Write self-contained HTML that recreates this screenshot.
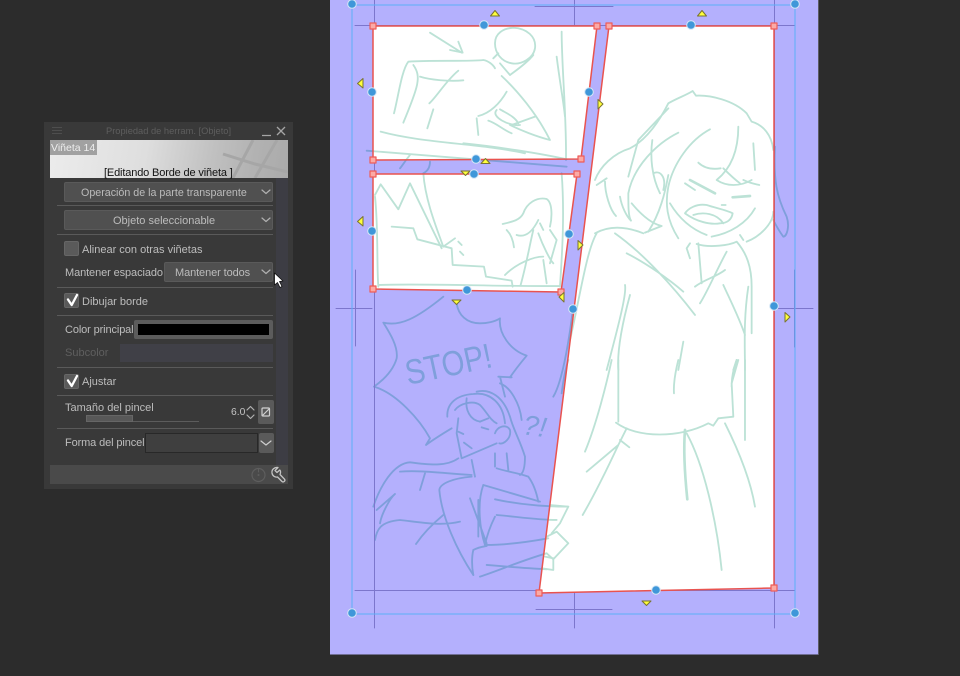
<!DOCTYPE html>
<html><head><meta charset="utf-8">
<style>
html,body{margin:0;padding:0;background:#2c2c2c}
#root{position:relative;width:960px;height:676px;overflow:hidden;background:#2c2c2c;font-family:"Liberation Sans",sans-serif;font-size:11px;color:#bdbdbd;filter:blur(.35px)}
#root>svg{position:absolute;left:0;top:0}
.a{position:absolute}
.t{position:absolute;white-space:nowrap;line-height:14px}
.dd{position:absolute;background:#505050;border:1px solid #5a5a5a;border-radius:2px;box-sizing:border-box;text-align:center;line-height:18px;color:#bcbcbc}
.dd span{top:1px}
.hr{position:absolute;left:57px;width:216px;height:1px;background:#5a5a5a}
.cb{position:absolute;left:64px;width:15px;height:15px;background:#5a5a5a;border:1px solid #666;border-radius:2px;box-sizing:border-box}
</style></head><body>
<div id="root">
<svg width="960" height="676" viewBox="0 0 960 676" fill="none" stroke-linecap="round" stroke-linejoin="round">
<defs>
<clipPath id="pc"><polygon points="373,26 597,26 581,159 373,160"/><polygon points="373,174 577,174 561,292 373,289"/><polygon points="609,26 774,26 774,588 539,593"/></clipPath>
<g id="sk">
<g transform="translate(330,0) scale(.3333)" stroke-width="5.500">
<path d="M300 98L395 158M385 125L398 158L360 150"/>
<path d="M495 130C495 100 520 85 550 83C590 85 620 110 615 145C610 175 575 195 545 190C515 185 495 160 495 130Z"/>
<path d="M490 175L505 160M510 190L540 225M610 165C590 190 560 210 540 225"/>
<path d="M192 340C205 290 215 210 235 185C300 180 420 185 460 180C475 182 490 195 495 205"/>
<path d="M250 195C275 230 265 260 220 368M270 230C300 240 360 245 400 241M385 212C350 240 320 290 298 310M310 328L292 385"/>
<path d="M515 228C560 270 620 340 660 420C620 410 570 390 540 375M530 275C510 310 480 340 445 348M440 355L445 405"/>
<path d="M475 362C500 370 520 390 545 400M500 330C480 350 540 380 570 375M615 350L545 375M510 328C530 340 555 350 565 370"/>
<path d="M152 395C280 430 450 430 585 460M400 430C500 440 630 460 710 478M695 95C695 200 710 350 708 480M680 170C690 250 700 300 705 350M110 452C250 465 400 475 710 500"/>
<path d="M240 465C220 490 215 500 210 505M300 485C300 505 290 515 280 520"/>
<path d="M135 585L152 553L205 628L240 550L335 745M280 520C285 590 310 660 340 740M340 740L375 715M385 725L395 735M390 755L400 765"/>
<path d="M185 680L250 685L262 718L365 745L368 795L462 800L468 830L545 842L548 860"/>
<path d="M135 590C145 680 140 800 145 860M695 520C705 650 695 780 690 860M145 855C300 850 500 860 690 858"/>
<path d="M518 672C550 665 570 660 580 640C590 610 620 590 650 597C670 610 665 660 660 680M530 690C545 705 550 725 552 742M560 705C590 715 610 690 625 660M610 690C600 730 590 790 572 855M525 825C560 790 610 770 640 770M625 700C640 740 660 780 670 790M660 690L680 720L660 790M640 780L650 850M630 670L640 690"/>
</g>
<g transform="translate(340,290) scale(.3333)" stroke-width="5.500">
<path d="M130 98C150 130 175 170 170 205C160 240 130 270 102 290C170 310 240 390 270 445L258 465C285 445 310 430 335 415M130 98C180 110 230 85 310 20"/>
<path d="M350 40C355 75 380 100 420 100C440 100 465 95 480 85C475 130 510 180 560 197C545 215 525 240 510 262"/>
<path d="M322 380C320 340 350 315 400 312C450 305 490 340 495 400M345 360C360 340 400 330 420 345C440 365 450 390 470 400M355 385L350 430L365 505L470 460M380 325C375 360 390 390 420 395"/>
<path d="M410 305C450 295 490 320 510 380C520 420 540 450 555 500C555 530 550 550 540 555M480 280C510 290 540 340 545 390M475 260L515 262M480 260L495 320"/>
<path d="M355 425L370 432M420 395L445 385M425 412L445 418M372 458L395 475M465 430C470 410 500 400 510 420C515 445 490 465 478 460M465 490L465 530M500 490L505 540M470 535C500 545 540 550 565 560C580 580 590 610 595 635"/>
<path d="M100 650C120 590 160 520 210 517C270 525 320 530 355 505M180 545C240 540 310 550 395 555M255 550L240 600M395 510L405 560M105 750C110 720 120 695 180 690C230 695 300 710 360 695M110 660L165 612C150 625 125 670 120 700M228 762C250 730 280 700 310 675"/>
<path d="M395 560C340 565 300 580 298 600C305 680 350 780 400 855M390 625L440 760M415 630L415 740M430 585C410 640 420 720 435 765C500 765 570 755 625 745M430 585C480 600 550 620 600 635M465 628C520 640 590 650 685 650M470 675C530 680 590 690 650 690M465 680C450 710 440 740 435 765"/>
<path d="M400 780C395 800 395 830 400 855M400 780C420 770 430 770 440 768M440 825C500 830 560 835 620 838M420 860C480 840 550 810 620 790"/>
<path d="M630 645L685 650L660 700L635 730M620 740L650 725L685 760L640 808L620 790M615 800L640 805L640 840L605 835"/>
<path d="M700 50C690 130 670 270 640 320"/>
</g>
<g transform="translate(570,80) scale(.3333)" stroke-width="5.500">
<path d="M295 70C270 120 230 180 180 205C130 220 90 260 75 300M175 290L205 180L295 85M295 70C320 55 350 45 368 33L378 47C420 45 490 60 530 100L545 125C580 135 605 165 610 210"/>
<path d="M325 158C260 190 190 260 175 340C175 380 175 410 183 422C170 410 155 380 150 350M105 305C105 340 120 390 138 408M80 315L110 295"/>
<path d="M420 148C360 180 310 250 295 320C285 370 290 420 325 475M247 180C240 230 245 290 270 340M250 280C270 270 290 290 280 330M295 285C285 340 270 400 235 455M185 370C210 400 240 430 275 438L225 458"/>
<path d="M505 140C505 200 490 260 440 300C470 320 510 320 545 300M460 265C475 280 490 295 510 310M550 190L555 270"/>
<path d="M385 248C400 262 420 270 452 265M520 300C540 310 555 312 568 315M345 310L375 330M455 375L467 375"/>
<path d="M360 300L435 340M488 352L540 348" stroke-width="8"/>
<path d="M345 400C355 385 380 370 410 375C440 385 470 390 488 400C485 420 470 430 450 430C420 435 380 425 345 400ZM370 405C400 395 440 400 460 430"/>
<path d="M610 395C610 430 570 470 530 485M510 465L520 480M425 470C480 460 530 430 555 385M300 370C330 420 370 450 410 465"/>
<path d="M360 490L350 505L360 535M385 490L395 610M380 492C420 505 480 495 500 485C530 520 545 560 545 620L545 760M470 515C440 570 410 640 390 670M375 620C400 600 440 590 465 570"/>
<path d="M75 460C120 435 170 440 220 460M0 780C30 650 50 510 80 460M135 460C220 520 310 620 375 705M170 520C230 550 300 600 340 635M165 615C170 640 150 720 110 870M180 645C165 700 140 800 145 870"/>
<path d="M460 615C490 680 510 720 525 765M535 620C520 720 525 800 525 870M340 785L325 870M500 840L490 870M615 200C610 300 620 350 650 410C660 440 650 470 640 470C625 450 615 430 610 420"/>
</g>
<g transform="translate(530,360) scale(.3333)" stroke-width="5.500">
<path d="M265 0L265 185M258 188C320 235 450 235 535 190L550 197L565 175L610 170L605 70L625 0M645 0L645 240M620 0C610 30 605 50 605 80M245 0C230 70 200 190 165 275"/>
<path d="M290 205L265 255L170 335M270 240L298 262M265 255C230 330 190 410 158 465M445 0C435 40 430 70 432 100M470 220C520 310 560 480 575 630M585 190C620 260 660 350 675 440M115 0C105 30 100 60 95 100"/>
<path d="M465 210C460 270 465 350 472 418" stroke-width="8"/>
</g>
</g>
</defs>
<rect x="330" y="0" width="488" height="654.500" fill="#b4b0fd"/>
<rect x="818" y="0" width="1" height="655" fill="#5b5b66"/>
<use href="#sk" stroke="#7f9fdb"/>
<text transform="translate(408 385) rotate(-12) scale(.84 1)" font-family="Liberation Sans, sans-serif" font-size="35" fill="#7f9fdb">STOP!</text>
<text x="522" y="434" transform="rotate(8 522 434)" font-family="Liberation Sans, sans-serif" font-size="28" font-style="italic" fill="#7f9fdb">?!</text>
<g stroke="#7c76cc" stroke-width="1" fill="none">
<path d="M374.500 0V628M774.500 0V628M574.500 0V26M574.500 590V628M355 25.500H795M355 590.500H795M336 308.500H372M777 308.500H813M355.500 270V346M794.500 270V347M535 6.500H613M536 609.500H612"/>
</g>
<polygon points="373,26 597,26 581,159 373,160" fill="#fff"/>
<polygon points="373,174 577,174 561,292 373,289" fill="#fff"/>
<polygon points="609,26 774,26 774,588 539,593" fill="#fff"/>
<g clip-path="url(#pc)"><use href="#sk" stroke="#bce2d6"/></g>
<g fill="none" stroke="#e9534f" stroke-width="1.500">
<polygon points="373,26 597,26 581,159 373,160"/>
<polygon points="373,174 577,174 561,292 373,289"/>
<polygon points="609,26 774,26 774,588 539,593"/>
</g>
<rect x="352" y="5" width="443" height="609" stroke="#5bb0f6" stroke-width="1" fill="none"/>
<g fill="#fbaaa6" stroke="#ee5c58" stroke-width="1.200">
<rect x="370" y="23" width="6" height="6"/><rect x="594" y="23" width="6" height="6"/><rect x="606" y="23" width="6" height="6"/><rect x="771" y="23" width="6" height="6"/><rect x="370" y="157" width="6" height="6"/><rect x="578" y="156" width="6" height="6"/><rect x="370" y="171" width="6" height="6"/><rect x="574" y="171" width="6" height="6"/><rect x="370" y="286" width="6" height="6"/><rect x="558" y="289" width="6" height="6"/><rect x="536" y="590" width="6" height="6"/><rect x="771" y="585" width="6" height="6"/>
</g>
<g fill="#ffff3c" stroke="#7a7430" stroke-width="1">
<path d="M490.500 16H499.500L495 10.500Z"/><path d="M697.500 16H706.500L702 10.500Z"/>
<path d="M363 78.500V88L357.500 83.500Z"/><path d="M363 216.500V226L357.500 221.500Z"/>
<path d="M598 99.500V109L603 104Z"/><path d="M578 240.500V250L583 245Z"/>
<path d="M461 171H470L465.500 175.500Z"/><path d="M481 163.500H490L485.500 158.500Z"/>
<path d="M452 300H461L456.500 304.500Z"/><path d="M785 312.500V322L790 317Z"/>
<path d="M642 601H651L646.500 605.500Z"/><path d="M564 292.500V302L559 297Z"/>
</g>
<g fill="#3f97d9" stroke="#d3e6f6" stroke-width="1">
<circle cx="484" cy="25" r="4.300"/><circle cx="691" cy="25" r="4.300"/><circle cx="372" cy="92" r="4.300"/><circle cx="372" cy="231" r="4.300"/><circle cx="589" cy="92" r="4.300"/><circle cx="569" cy="234" r="4.300"/><circle cx="476" cy="159" r="4.300"/><circle cx="474" cy="174" r="4.300"/><circle cx="467" cy="290" r="4.300"/><circle cx="573" cy="309" r="4.300"/><circle cx="774" cy="306" r="4.300"/><circle cx="656" cy="590" r="4.300"/><circle cx="352" cy="4" r="4.300"/><circle cx="795" cy="4" r="4.300"/><circle cx="352" cy="613" r="4.300"/><circle cx="795" cy="613" r="4.300"/>
</g>
</svg>

<div class="a" style="left:44px;top:122px;width:249px;height:367px;background:#393939"></div>
<div class="a" style="left:276px;top:178px;width:12px;height:287px;background:#3d3d44"></div>
<div class="a" style="left:50px;top:465px;width:238px;height:19px;background:#4a4a4a"></div>
<div class="a" style="left:50px;top:140px;width:238px;height:38px;background:linear-gradient(100deg,#ececec 0%,#dedede 40%,#c0c0c0 68%,#b2b2b2 85%,#aaaaaa 100%)"></div>
<svg class="a" style="left:215px;top:140px" width="73" height="38" fill="none" stroke="#a6a6a6" stroke-width="3"><path d="M8 14L40 24L73 32M38 0L18 38M62 0L40 38"/></svg>
<div class="t" style="left:106px;top:124px;font-size:9.300px;color:#5e5e5e">Propiedad de herram. [Objeto]</div>
<svg class="a" style="left:52px;top:126px" width="10" height="9" stroke="#4e4e4e" stroke-width="1"><path d="M0 1.500H10M0 4.500H10M0 7.500H10"/></svg>
<svg class="a" style="left:261px;top:125px" width="26" height="12" stroke="#a5a5a5" stroke-width="1.300" fill="none"><path d="M1 10.500H10M16 2L24 10M24 2L16 10"/></svg>
<div class="a" style="left:50px;top:140px;width:47px;height:15px;background:#a1a1a1"></div>
<div class="t" style="left:51px;top:141px;font-size:10.500px;color:#eeeeee">Viñeta 14</div>
<div class="t" style="left:104px;top:166px;font-size:11px;letter-spacing:-.15px;color:#111">[Editando Borde de viñeta ]</div>

<div class="dd" style="left:64px;top:182px;width:209px;height:20px"><span style="position:absolute;left:16px;white-space:nowrap;font-size:10.700px">Operación de la parte transparente</span></div>
<div class="hr" style="top:205px"></div>
<div class="dd" style="left:64px;top:210px;width:209px;height:20px"><span style="position:absolute;left:48px;white-space:nowrap">Objeto seleccionable</span></div>
<div class="hr" style="top:234px"></div>
<div class="cb" style="top:241px"></div>
<div class="t" style="left:82px;top:243px">Alinear con otras viñetas</div>
<div class="t" style="left:65px;top:266px;letter-spacing:-.1px">Mantener espaciado</div>
<div class="dd" style="left:164px;top:262px;width:109px;height:20px"><span style="position:absolute;left:10px;white-space:nowrap;letter-spacing:-.1px">Mantener todos</span></div>
<div class="hr" style="top:287px"></div>
<div class="cb" style="top:293px"></div>
<div class="t" style="left:82px;top:295px">Dibujar borde</div>
<div class="hr" style="top:315px"></div>
<div class="t" style="left:65px;top:323px;letter-spacing:-.12px">Color principal</div>
<div class="a" style="left:134px;top:320px;width:139px;height:19px;background:#5c5c5c;border-radius:2px"></div>
<div class="a" style="left:138px;top:324px;width:131px;height:11px;background:#000"></div>
<div class="t" style="left:65px;top:346px;color:#5f5f5f">Subcolor</div>
<div class="a" style="left:120px;top:344px;width:153px;height:18px;background:#404047"></div>
<div class="hr" style="top:367px"></div>
<div class="cb" style="top:374px"></div>
<div class="t" style="left:82px;top:375px">Ajustar</div>
<div class="hr" style="top:395px"></div>
<div class="t" style="left:65px;top:401px">Tamaño del pincel</div>
<div class="a" style="left:86px;top:415px;width:113px;height:7px;border-bottom:1px solid #5c5c5c;box-sizing:border-box"></div>
<div class="a" style="left:86px;top:415px;width:47px;height:7px;background:#585858;border:1px solid #666;box-sizing:border-box"></div>
<div class="t" style="left:231px;top:406px;color:#c4c4c4;font-size:10.300px">6.0</div>
<div class="a" style="left:258px;top:400px;width:16px;height:24px;background:#5a5a5a;border-radius:2px"></div>
<div class="hr" style="top:428px"></div>
<div class="t" style="left:65px;top:436px;letter-spacing:-.12px">Forma del pincel</div>
<div class="a" style="left:145px;top:433px;width:113px;height:20px;background:#3f3f3f;border:1px solid #282828;box-sizing:border-box"></div>
<div class="a" style="left:259px;top:433px;width:15px;height:20px;background:#5a5a5a;border-radius:2px"></div>

<svg class="a" style="left:0;top:0" width="960" height="676" fill="none" stroke-linecap="round" stroke-linejoin="round">
<g stroke="#b0b0b0" stroke-width="1.200">
<path d="M262 190L266 193.500L270 190M262 218L266 221.500L270 218M262 270L266 273.500L270 270"/>
<path d="M247 410L250.500 406.500L254 410M247 415L250.500 418.500L254 415"/>
<path d="M261 441L266 445L271 441" stroke="#cfcfcf"/>
<rect x="262" y="408" width="7.500" height="8" rx="1" stroke="#d0d0d0"/><path d="M263 415L269 409" stroke="#d0d0d0"/>
</g>
<path d="M68 299.500L71.700 305L77 295M68 380.500L71.700 386L77 376" stroke="#fff" stroke-width="2.300"/>
<circle cx="258.500" cy="475" r="6.500" stroke="#5e5e5e" stroke-width="1.200"/><circle cx="258.500" cy="475" r="1" fill="#5e5e5e"/><path d="M258.500 468.500V472" stroke="#5e5e5e"/>
<path d="M278 467.500C274.500 467 271.500 469.500 272 473C272.500 476 275 477.500 277.500 477L282 481.500C283.500 482.800 285.800 480.800 284.500 479.200L280 474.500C281 472.500 280.500 470.500 279.800 470L277 472.500L275 470.500Z" stroke="#c4c4c4" stroke-width="1.300"/>
<path d="M274.500 273V285L277.500 282.500L280 287.500L282 286.500L279.500 281.500L283 281Z" fill="#fff" stroke="#111" stroke-width=".8"/>
</svg>
</div>
</body></html>
